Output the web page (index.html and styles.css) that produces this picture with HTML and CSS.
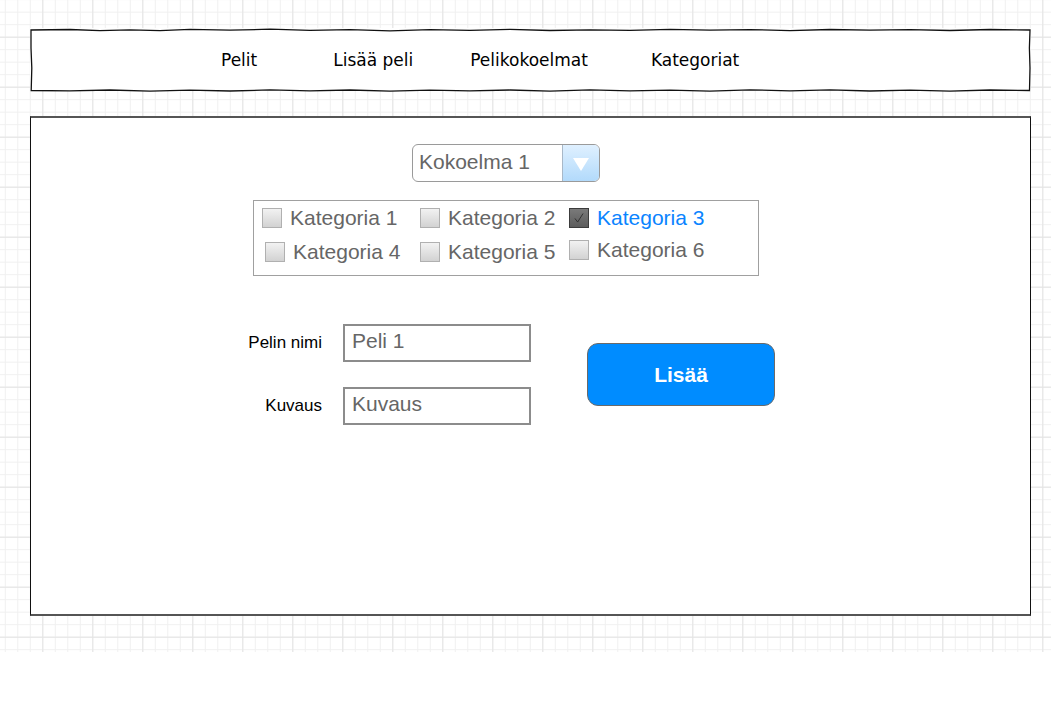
FILE: index.html
```html
<!DOCTYPE html>
<html lang="fi">
<head>
<meta charset="utf-8">
<title>Lisää peli</title>
<link rel="stylesheet" href="styles.css">
</head>
<body>
<div class="canvas">
  <nav class="nav">
    <svg class="nav-border" viewBox="0 0 1001 63" preserveAspectRatio="none" aria-hidden="true">
      <path d="M1 2 L40 1.5 L70 2.6 L100 1.8 L130 2.7 L160 1.4 L200 2.2 L240 1.2 L280 2.4 L320 1.6 L360 2.8 L400 1.7 L440 2.3 L480 1.4 L520 2.5 L560 1.8 L600 2.3 L640 1.3 L680 2.2 L720 1.6 L760 2.6 L800 1.5 L840 2.1 L880 1.7 L920 2.5 L960 1.5 L1000 2 L999.4 20 L1000 40 L999.5 62.5 L960 62 L920 63.2 L880 62.2 L840 63 L800 61.9 L760 62.8 L720 61.8 L680 63.1 L640 62.2 L600 62.8 L560 61.9 L520 63.1 L480 62 L440 62.9 L400 62.2 L360 63.2 L320 62 L280 62.8 L240 61.9 L200 63 L160 62.1 L120 63.1 L80 62 L40 62.9 L1.2 62.5 L1.8 40 L1 20 Z" fill="none" stroke="#111" stroke-width="1.3" vector-effect="non-scaling-stroke"/>
    </svg>
    <a class="nav-item nav-pelit">Pelit</a>
    <a class="nav-item nav-lisaa">Lisää peli</a>
    <a class="nav-item nav-koko">Pelikokoelmat</a>
    <a class="nav-item nav-kat">Kategoriat</a>
  </nav>

  <main class="panel">
    <div class="select">
      <span class="select-text">Kokoelma 1</span>
      <span class="select-btn"><span class="tri"></span></span>
    </div>

    <div class="cats">
      <label class="cat"><span class="box"></span><span class="cat-text">Kategoria 1</span></label>
      <label class="cat"><span class="box"></span><span class="cat-text">Kategoria 2</span></label>
      <label class="cat cat-on"><span class="box box-on"><svg viewBox="0 0 20 20" class="check"><path d="M5.5 10.5 L8.5 14.5 L14.5 5" fill="none" stroke="#2a2a2a" stroke-width="1"/></svg></span><span class="cat-text">Kategoria 3</span></label>
      <label class="cat cat-shift"><span class="box"></span><span class="cat-text">Kategoria 4</span></label>
      <label class="cat"><span class="box"></span><span class="cat-text">Kategoria 5</span></label>
      <label class="cat cat-up"><span class="box"></span><span class="cat-text">Kategoria 6</span></label>
    </div>

    <div class="form">
      <div class="fields">
        <div class="field">
          <span class="label">Pelin nimi</span>
          <span class="input">Peli 1</span>
        </div>
        <div class="field">
          <span class="label">Kuvaus</span>
          <span class="input">Kuvaus</span>
        </div>
      </div>
      <button class="btn">Lisää</button>
    </div>
  </main>
</div>
</body>
</html>
```

FILE: styles.css
```css
* { box-sizing: border-box; }

html, body {
  margin: 0;
  padding: 0;
  background: #fff;
}

.canvas {
  height: 652px;
  padding: 28px 20px 0 30px;
  background-color: #fff;
  background-image:
    linear-gradient(#e4e4e4 1px, transparent 1px),
    linear-gradient(90deg, #e4e4e4 1px, transparent 1px),
    linear-gradient(#f0f0f0 1px, transparent 1px),
    linear-gradient(90deg, #f0f0f0 1px, transparent 1px);
  background-size: 50px 50px, 50px 50px, 12.5px 12.5px, 12.5px 12.5px;
  background-position: 0 36.7px, 42.3px 0, 0 11.7px, 4.8px 0;
}

.nav {
  position: relative;
  width: 1001px;
  height: 63px;
  background: #fff;
  display: flex;
  align-items: center;
  font-family: "DejaVu Sans", sans-serif;
  font-size: 17px;
  color: #000;
}

.nav-border {
  position: absolute;
  left: 0;
  top: 0;
  width: 100%;
  height: 100%;
  overflow: visible;
}

.nav-item { position: relative; white-space: nowrap; }
.nav-pelit { margin-left: 191px; }
.nav-lisaa { margin-left: 76px; }
.nav-koko { margin-left: 57px; }
.nav-kat { margin-left: 63px; }

.panel {
  margin-top: 25px;
  width: 1001px;
  height: 500px;
  background: #fff;
  border-top: 2px solid #555;
  border-bottom: 2px solid #555;
  border-left: 1px solid #111;
  border-right: 1px solid #111;
  padding-left: 199px;
  font-family: "Liberation Sans", Arial, sans-serif;
}

.select {
  margin: 26px 0 0 182px;
  width: 188px;
  height: 38px;
  border: 1px solid #9a9a9a;
  border-radius: 6px;
  display: flex;
  overflow: hidden;
  background: #fff;
}

.select-text {
  flex: 1;
  padding-left: 6px;
  font-size: 21px;
  line-height: 34px;
  color: #666;
}

.select-btn {
  width: 37px;
  border-left: 1px solid #a8b8c8;
  background: linear-gradient(#dff0ff, #b2dafb);
  display: flex;
  align-items: center;
  justify-content: center;
}

.tri {
  width: 0;
  height: 0;
  border-left: 8px solid transparent;
  border-right: 8px solid transparent;
  border-top: 13px solid #fff;
  margin-top: 3px;
}

.cats {
  margin: 18px 0 0 23px;
  width: 506px;
  height: 76px;
  border: 1px solid #a0a0a0;
  display: grid;
  grid-template-columns: 158px 149px 1fr;
  grid-auto-rows: 34px;
  padding: 0 0 0 8px;
  background: #fff;
}

.cat {
  display: flex;
  align-items: center;
  font-size: 21px;
  color: #666;
  white-space: nowrap;
}

.cat-shift { padding-left: 3px; }
.cat-up { margin-top: -4px; }

.box {
  width: 20px;
  height: 20px;
  border: 1px solid #b0b0b0;
  background: linear-gradient(#f2f2f2, #d2d2d2);
  margin-right: 8px;
  flex: none;
  display: flex;
}

.box-on {
  border-color: #3c3c3c;
  background: linear-gradient(#7a7a7a, #5c5c5c);
}

.check { width: 100%; height: 100%; }

.cat-on .cat-text { color: #0a84ff; }

.form {
  margin: 48px 0 0 0;
  display: flex;
  align-items: flex-start;
}

.fields {
  display: flex;
  flex-direction: column;
  gap: 25px;
}

.field {
  display: flex;
  align-items: center;
  height: 38px;
}

.label {
  width: 92px;
  text-align: right;
  font-size: 17px;
  color: #000;
  margin-right: 21px;
}

.input {
  width: 188px;
  height: 38px;
  border: 2px solid #8c8c8c;
  padding: 1px 0 0 7px;
  font-size: 21px;
  line-height: 28px;
  color: #666;
  background: #fff;
}

.btn {
  margin: 19px 0 0 56px;
  width: 188px;
  height: 63px;
  border: 1px solid #6a6a6a;
  border-radius: 11px;
  background: #008cff;
  color: #fff;
  font-family: "Liberation Sans", Arial, sans-serif;
  font-size: 21px;
  font-weight: bold;
  padding: 0;
}
```
